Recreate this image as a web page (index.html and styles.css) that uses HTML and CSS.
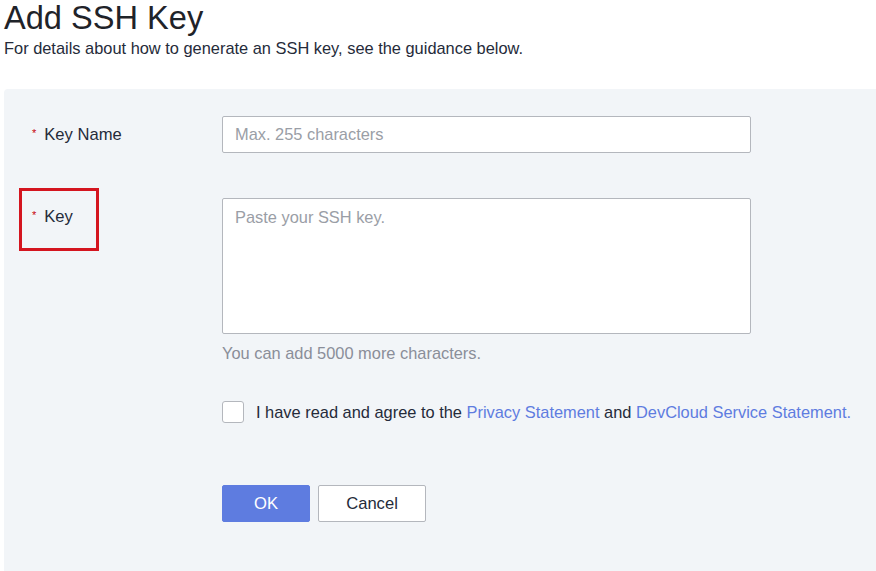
FILE: index.html
```html
<!DOCTYPE html>
<html lang="en">
<head>
<meta charset="utf-8">
<title>Add SSH Key</title>
<link rel="stylesheet" href="styles.css">
</head>
<body>
<header class="page-head">
  <h1 class="title">Add SSH Key</h1>
  <p class="subtitle">For details about how to generate an SSH key, see the guidance below.</p>
</header>
<main class="panel">
  <form class="form">
    <div class="label"><span class="req">*</span>Key Name</div>
    <div class="field"><input class="input" type="text" placeholder="Max. 255 characters"></div>

    <div class="label label-key"><span class="req">*</span>Key<span class="highlight"></span></div>
    <div class="field">
      <textarea class="textarea" placeholder="Paste your SSH key."></textarea>
      <div class="hint">You can add 5000 more characters.</div>
    </div>

    <div class="spacer"></div>
    <div class="field agree">
      <span class="checkbox"></span>
      <span class="agree-text">I have read and agree to the <a class="link" href="#">Privacy Statement</a> and <a class="link" href="#">DevCloud Service Statement.</a></span>
    </div>

    <div class="spacer"></div>
    <div class="field actions">
      <button type="button" class="btn btn-primary">OK</button>
      <button type="button" class="btn btn-default">Cancel</button>
    </div>
  </form>
</main>
</body>
</html>
```
FILE: styles.css
```css
* { box-sizing: border-box; }
html, body { margin: 0; padding: 0; }
body {
  background: #ffffff;
  font-family: "Liberation Sans", Arial, sans-serif;
  color: #252b3a;
  width: 876px;
  height: 571px;
  overflow: hidden;
  display: flex;
  flex-direction: column;
}
.page-head { padding-left: 4px; }
.title {
  margin: 0;
  font-size: 32.6px;
  line-height: 36px;
  font-weight: normal;
  color: #1f2329;
}
.subtitle {
  margin: 2px 0 0;
  font-size: 16.4px;
  line-height: 20px;
  color: #252b3a;
}
.panel {
  flex: 1;
  margin: 31px 0 0 4px;
  background: #f2f5f8;
  border-top-left-radius: 4px;
  padding: 27px 0 0 28px;
}
.form {
  display: grid;
  grid-template-columns: 190px 529px;
  row-gap: 45px;
}
.label {
  position: relative;
  font-size: 16.6px;
  line-height: 37px;
  color: #252b3a;
  display: flex;
  align-items: center;
  height: 37px;
}
.req {
  color: #c7000b;
  font-size: 11px;
  margin-right: 8px;
  position: relative;
  top: -1px;
}
.highlight {
  position: absolute;
  left: -13px;
  top: -10px;
  width: 80px;
  height: 63px;
  border: 3px solid #d4151f;
}
.input {
  display: block;
  width: 100%;
  height: 37px;
  border: 1px solid #b4b7bd;
  border-radius: 2px;
  background: #fff;
  padding: 0 12px;
  font-family: inherit;
  font-size: 16.4px;
  color: #252b3a;
  outline: none;
}
.input::placeholder, .textarea::placeholder { color: #9a9ea6; }
.textarea {
  display: block;
  width: 100%;
  height: 136px;
  border: 1px solid #b4b7bd;
  border-radius: 2px;
  background: #fff;
  padding: 7px 12px;
  font-family: inherit;
  font-size: 16.4px;
  line-height: 22px;
  color: #252b3a;
  resize: none;
  outline: none;
}
.hint {
  margin-top: 9px;
  font-size: 16.4px;
  line-height: 20px;
  color: #8a8e99;
}
.agree {
  display: flex;
  align-items: center;
  gap: 12px;
  white-space: nowrap;
  margin-top: -7px;
}
.checkbox {
  width: 22px;
  height: 22px;
  border: 1px solid #b4b7bd;
  border-radius: 3px;
  background: #fff;
  flex: none;
}
.agree-text {
  font-size: 16.4px;
  line-height: 22px;
  color: #252b3a;
}
.link {
  color: #5e7ce0;
  text-decoration: none;
}
.actions {
  display: flex;
  gap: 8px;
  margin-top: 17px;
}
.btn {
  height: 37px;
  border-radius: 2px;
  font-family: inherit;
  font-size: 16.6px;
  padding: 0;
  cursor: pointer;
}
.btn-primary {
  width: 88px;
  background: #5e7ce0;
  border: 1px solid #5e7ce0;
  color: #fff;
}
.btn-default {
  width: 108px;
  background: #fff;
  border: 1px solid #b4b7bd;
  color: #252b3a;
}
```
